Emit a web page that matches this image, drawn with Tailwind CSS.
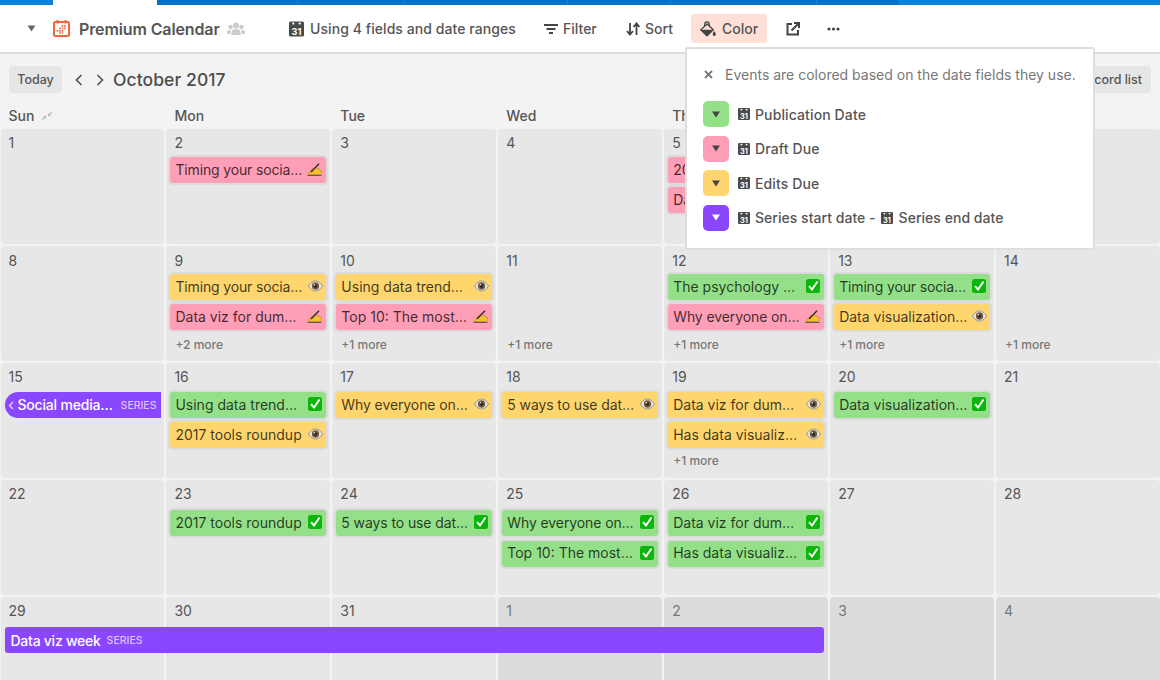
<!DOCTYPE html>
<html lang="en">
<head>
<meta charset="utf-8">
<title>Premium Calendar</title>
<script src="https://cdn.jsdelivr.net/npm/@tailwindcss/browser@4"></script>
</head>
<body class="m-0 bg-[#f3f3f3] font-['Inter',sans-serif] text-[#4d4d4d]">
<svg width="0" height="0" class="absolute">
  <defs>
    <symbol id="eye" viewBox="0 0 16 12">
      <path d="M0.5 6C3 2 5.500 0.700 8 0.700S13 2 15.500 6C13 10 10.500 11.300 8 11.300S3 10 0.500 6Z" fill="#e3e3e3" stroke="#8c8c8c" stroke-width="1"/>
      <circle cx="8" cy="6" r="3.900" fill="#7a5a3c"/>
      <circle cx="8" cy="6" r="2" fill="#2a2a2a"/>
      <circle cx="6.800" cy="4.600" r="0.800" fill="#fff"/>
    </symbol>
    <symbol id="check" viewBox="0 0 14 14">
      <rect x="0" y="0" width="14" height="14" rx="2.500" fill="#0bb50b"/>
      <path d="M3 7.200L6 10.500L11.500 2.500" fill="none" stroke="#fff" stroke-width="2"/>
    </symbol>
    <symbol id="hand" viewBox="0 0 15 13">
      <path d="M0.500 12.500H14.500" stroke="#444" stroke-width="0.800"/>
      <path d="M1 11.500L4.500 6.500L8.500 4.500L14.800 8C15.200 10 14 11.500 12.500 11.500Z" fill="#f4c22f" stroke="#a87f14" stroke-width="0.600"/>
      <path d="M4 9L12 0.700" stroke="#2d2d2d" stroke-width="1.400"/>
    </symbol>
    <symbol id="cal" viewBox="0 0 14 14">
      <rect x="0" y="0" width="14" height="14" rx="1.500" fill="#4a4a4a"/>
      <rect x="3" y="1" width="2" height="1.700" fill="#fff"/>
      <rect x="9" y="1" width="2" height="1.700" fill="#fff"/>
      <text x="7" y="12.400" text-anchor="middle" font-size="8.500" font-weight="700" fill="#fff" font-family="Inter, sans-serif">31</text>
    </symbol>
    <symbol id="caretdown" viewBox="0 0 10 8">
      <path d="M0.500 0.500H9.500L5 7.500Z" fill="currentColor"/>
    </symbol>
  </defs>
</svg>

<div class="relative h-[680px] w-[1160px] overflow-hidden">
  <!-- top strip -->
  <div class="flex h-[5px] bg-[#0a82dc]">
    <div class="w-[53px]"></div>
    <div class="w-[104px] bg-white"></div>
    <div class="flex w-[742px] bg-[#0371c8]">
      <div class="w-[141px] border-r border-[#0a82dc]"></div>
      <div class="w-[106px] border-r border-[#0a82dc]"></div>
      <div class="w-[164px] border-r border-[#0a82dc]"></div>
      <div class="w-[103px] border-r border-[#0a82dc]"></div>
      <div class="w-[146px] border-r border-[#0a82dc]"></div>
    </div>
  </div>

  <!-- toolbar -->
  <div class="flex h-[49px] items-center border-b-2 border-[#dddddd] bg-white text-[14px] font-medium text-[#555]">
    <svg class="ml-[27px] h-[7px] w-[9px] text-[#666]"><use href="#caretdown"/></svg>
    <svg class="ml-[17px] h-[17px] w-[17px]" viewBox="0 0 17 17">
      <rect x="1" y="2" width="15" height="14" rx="1.500" fill="#fff" stroke="#f0653b" stroke-width="2"/>
      <rect x="3.500" y="0" width="2" height="3.500" fill="#f0653b"/><rect x="11.500" y="0" width="2" height="3.500" fill="#f0653b"/>
      <g fill="#f4795a"><rect x="8.500" y="5" width="1.800" height="1.800"/><rect x="11" y="5" width="1.800" height="1.800"/><rect x="6" y="7.500" width="1.800" height="1.800"/><rect x="8.500" y="7.500" width="1.800" height="1.800"/><rect x="11" y="7.500" width="1.800" height="1.800"/><rect x="3.500" y="10" width="1.800" height="1.800"/><rect x="6" y="10" width="1.800" height="1.800"/><rect x="8.500" y="10" width="1.800" height="1.800"/><rect x="6" y="12.300" width="1.800" height="1.500"/><rect x="8.500" y="12.300" width="1.800" height="1.500"/></g>
    </svg>
    <span class="ml-[9px] w-[148px] whitespace-nowrap text-[16px] font-semibold tracking-[-0.12px]">Premium Calendar</span>
    <svg class="h-[14px] w-[18px] text-[#ccc]" viewBox="0 0 18 14" fill="currentColor">
      <circle cx="9" cy="3.500" r="3"/><circle cx="3.500" cy="5" r="2.300"/><circle cx="14.500" cy="5" r="2.300"/>
      <path d="M4.500 13V10C4.500 8 6.500 7 9 7S13.500 8 13.500 10V13Z"/><path d="M0 12V10C0 8.500 1.500 8 3.500 8L3.500 12Z"/><path d="M18 12V10C18 8.500 16.500 8 14.500 8L14.500 12Z"/>
    </svg>
    <svg class="ml-[44px] h-[16px] w-[15px]"><use href="#cal"/></svg>
    <span class="ml-[6px] w-[206px] whitespace-nowrap tracking-[0.07px]">Using 4 fields and date ranges</span>
    <svg class="ml-[28px] h-[12px] w-[14px] text-[#444]" viewBox="0 0 14 12" fill="currentColor"><rect x="0" y="1" width="14" height="2"/><rect x="2.500" y="5" width="9" height="2"/><rect x="5" y="9" width="4" height="2"/></svg>
    <span class="ml-[5px] w-[35px]">Filter</span>
    <svg class="ml-[28px] h-[14px] w-[14px] text-[#444]" viewBox="0 0 14 14" fill="none" stroke="currentColor" stroke-width="1.800"><path d="M4 1V12M1 9L4 12.500L7 9"/><path d="M10.500 13V2M7.500 5L10.500 1.500L13.500 5"/></svg>
    <span class="ml-[5px] w-[29px]">Sort</span>
    <div class="ml-[17px] flex h-[28.5px] w-[76px] items-center rounded-[3px] bg-[#ffe0d6] pl-[9px]">
      <svg class="h-[16px] w-[16px] text-[#444]" viewBox="0 0 16 16" fill="currentColor">
        <path d="M4.700 5.500V3.300C4.700 1.800 5.700 0.800 7 0.800C8.300 0.800 9.300 1.800 9.300 3.300V6" fill="none" stroke="currentColor" stroke-width="1.200"/>
        <path d="M7 3L0.800 8.800L7 14.800L13.300 8.800Z" fill="#ffe0d6" stroke="currentColor" stroke-width="1.300"/>
        <path d="M0.800 8.800H13.300L7 14.800Z"/>
        <path d="M14.200 10C15.200 11.500 15.800 12.500 15.800 13.300C15.800 14.300 15.100 15 14.200 15C13.300 15 12.700 14.300 12.700 13.300C12.700 12.500 13.200 11.500 14.200 10Z"/>
      </svg>
      <span class="ml-[6px]">Color</span>
    </div>
    <svg class="ml-[19px] h-[14px] w-[14px] text-[#444]" viewBox="0 0 14 14" fill="none" stroke="currentColor" stroke-width="2"><path d="M6 2H1.500V12.500H12V8"/><path d="M5.500 8.500L12 2M8 1H13V6"/></svg>
    <svg class="ml-[27px] h-[4px] w-[13px] text-[#444]" viewBox="0 0 13 4" fill="currentColor"><circle cx="2" cy="2" r="1.600"/><circle cx="6.500" cy="2" r="1.600"/><circle cx="11" cy="2" r="1.600"/></svg>
  </div>

  <!-- calendar controls -->
  <div class="flex h-[51px] items-center pl-[9px]">
    <div class="flex h-[27px] w-[53px] items-center justify-center rounded-[4px] bg-[#e6e6e6] pt-[1px] text-[12.500px] font-medium text-[#555]">Today</div>
    <svg class="ml-[13px] h-[12px] w-[8px] text-[#555]" viewBox="0 0 8 12" fill="none" stroke="currentColor" stroke-width="1.700"><path d="M6.500 1L1.500 6L6.500 11"/></svg>
    <svg class="ml-[13px] h-[12px] w-[8px] text-[#555]" viewBox="0 0 8 12" fill="none" stroke="currentColor" stroke-width="1.700"><path d="M1.500 1L6.500 6L1.500 11"/></svg>
    <span class="ml-[9px] pt-[2px] text-[17.500px] font-medium tracking-[0.08px] text-[#4d4d4d]">October 2017</span>
    <div class="ml-auto mr-[9px] flex h-[27px] w-[120px] items-center justify-end rounded-[4px] bg-[#e6e6e6] pr-[9px] pt-[1px] text-[12.500px] font-medium text-[#555]">Record list</div>
  </div>

  <!-- weekdays -->
  <div class="grid h-[24px] grid-cols-7 gap-x-[2px] pl-[0.5px] text-[14px] font-medium text-[#555]">
    <div class="flex items-center gap-[7px] pl-[8px] pb-[8px]">Sun
      <svg class="h-[10px] w-[12px] text-[#bbb]" viewBox="0 0 12 10" fill="none" stroke="currentColor" stroke-width="1.200"><path d="M1 9L4.500 5.500M2.500 5.500H4.500V7.500M11 1L7.500 4.500M9.500 4.500H7.500V2.500"/></svg>
    </div>
    <div class="flex items-center pl-[8px] pb-[8px]">Mon</div>
    <div class="flex items-center pl-[8px] pb-[8px]">Tue</div>
    <div class="flex items-center pl-[8px] pb-[8px]">Wed</div>
    <div class="flex items-center pl-[8px] pb-[8px]">Thu</div>
    <div class="invisible flex items-center pl-[8px] pb-[8px]">Fri</div>
    <div class="invisible flex items-center pl-[8px] pb-[8px]">Sat</div>
  </div>

  <!-- month grid -->
  <div class="grid auto-rows-[115px] grid-cols-7 gap-[2px] pl-[0.5px] text-[14px] text-[#555]">
    <!-- row 1 -->
    <div class="rounded-[4px] bg-[#e7e7e7] px-1 pt-[4px]"><div class="h-[20px] pl-[4px] leading-[20px]">1</div></div>
    <div class="flex flex-col gap-[4px] rounded-[4px] bg-[#e7e7e7] px-1 pb-[8px] pt-[4px]"><div class="h-[20px] pl-[4px] leading-[20px]">2</div>
      <div class="flex h-[26px] items-center justify-between rounded-[3px] bg-[#ff9eb7] pb-[2px] pl-[5px] pr-[4px] text-black/75 shadow-[0_0_0_2px_rgba(0,0,0,0.05)]"><span class="whitespace-nowrap tracking-[-0.15px]">Timing your socia…</span><svg class="h-[13px] w-[15px] shrink-0"><use href="#hand"/></svg></div>
    </div>
    <div class="rounded-[4px] bg-[#e7e7e7] px-1 pt-[4px]"><div class="h-[20px] pl-[4px] leading-[20px]">3</div></div>
    <div class="rounded-[4px] bg-[#e7e7e7] px-1 pt-[4px]"><div class="h-[20px] pl-[4px] leading-[20px]">4</div></div>
    <div class="flex flex-col gap-[4px] rounded-[4px] bg-[#e7e7e7] px-1 pb-[8px] pt-[4px]"><div class="h-[20px] pl-[4px] leading-[20px]">5</div>
      <div class="flex h-[26px] items-center rounded-[3px] bg-[#ff9eb7] pb-[2px] pl-[5px] text-black/75 shadow-[0_0_0_2px_rgba(0,0,0,0.05)]">2017 tools roundup</div>
      <div class="flex h-[26px] items-center rounded-[3px] bg-[#ff9eb7] pb-[2px] pl-[5px] text-black/75 shadow-[0_0_0_2px_rgba(0,0,0,0.05)]">Data viz for dum…</div>
    </div>
    <div class="rounded-[4px] bg-[#e7e7e7] px-1 pt-[4px]"></div>
    <div class="rounded-[4px] bg-[#e7e7e7] px-1 pt-[4px]"></div>

    <!-- row 2 -->
    <div class="rounded-[4px] bg-[#e7e7e7] px-1 pt-[4px]"><div class="h-[20px] pl-[4px] pt-[1px] leading-[20px]">8</div></div>
    <div class="flex flex-col gap-[4px] rounded-[4px] bg-[#e7e7e7] px-1 pb-[8px] pt-[4px]"><div class="h-[20px] pl-[4px] pt-[1px] leading-[20px]">9</div>
      <div class="flex h-[26px] items-center justify-between rounded-[3px] bg-[#ffd66e] pb-[2px] pl-[5px] pr-[3px] text-black/75 shadow-[0_0_0_2px_rgba(0,0,0,0.05)]"><span class="whitespace-nowrap tracking-[-0.15px]">Timing your socia…</span><svg class="h-[12px] w-[15px] shrink-0"><use href="#eye"/></svg></div>
      <div class="flex h-[26px] items-center justify-between rounded-[3px] bg-[#ff9eb7] pb-[2px] pl-[5px] pr-[4px] text-black/75 shadow-[0_0_0_2px_rgba(0,0,0,0.05)]"><span class="whitespace-nowrap">Data viz for dum…</span><svg class="h-[13px] w-[15px] shrink-0"><use href="#hand"/></svg></div>
      <div class="mt-auto h-[18px] pl-[5px] pt-[1px] text-[12px] font-medium leading-[18px] text-[#777]">+2 more</div>
    </div>
    <div class="flex flex-col gap-[4px] rounded-[4px] bg-[#e7e7e7] px-1 pb-[8px] pt-[4px]"><div class="h-[20px] pl-[4px] pt-[1px] leading-[20px]">10</div>
      <div class="flex h-[26px] items-center justify-between rounded-[3px] bg-[#ffd66e] pb-[2px] pl-[5px] pr-[3px] text-black/75 shadow-[0_0_0_2px_rgba(0,0,0,0.05)]"><span class="whitespace-nowrap">Using data trend…</span><svg class="h-[12px] w-[15px] shrink-0"><use href="#eye"/></svg></div>
      <div class="flex h-[26px] items-center justify-between rounded-[3px] bg-[#ff9eb7] pb-[2px] pl-[5px] pr-[4px] text-black/75 shadow-[0_0_0_2px_rgba(0,0,0,0.05)]"><span class="whitespace-nowrap">Top 10: The most…</span><svg class="h-[13px] w-[15px] shrink-0"><use href="#hand"/></svg></div>
      <div class="mt-auto h-[18px] pl-[5px] pt-[1px] text-[12px] font-medium leading-[18px] text-[#777]">+1 more</div>
    </div>
    <div class="flex flex-col gap-[4px] rounded-[4px] bg-[#e7e7e7] px-1 pb-[8px] pt-[4px]"><div class="h-[20px] pl-[4px] pt-[1px] leading-[20px]">11</div>
      <div class="mt-auto h-[18px] pl-[5px] pt-[1px] text-[12px] font-medium leading-[18px] text-[#777]">+1 more</div>
    </div>
    <div class="flex flex-col gap-[4px] rounded-[4px] bg-[#e7e7e7] px-1 pb-[8px] pt-[4px]"><div class="h-[20px] pl-[4px] pt-[1px] leading-[20px]">12</div>
      <div class="flex h-[26px] items-center justify-between rounded-[3px] bg-[#93e088] pb-[2px] pl-[5px] pr-[4px] text-black/75 shadow-[0_0_0_2px_rgba(0,0,0,0.05)]"><span class="whitespace-nowrap">The psychology …</span><svg class="h-[14px] w-[14px] shrink-0"><use href="#check"/></svg></div>
      <div class="flex h-[26px] items-center justify-between rounded-[3px] bg-[#ff9eb7] pb-[2px] pl-[5px] pr-[4px] text-black/75 shadow-[0_0_0_2px_rgba(0,0,0,0.05)]"><span class="whitespace-nowrap tracking-[-0.1px]">Why everyone on…</span><svg class="h-[13px] w-[15px] shrink-0"><use href="#hand"/></svg></div>
      <div class="mt-auto h-[18px] pl-[5px] pt-[1px] text-[12px] font-medium leading-[18px] text-[#777]">+1 more</div>
    </div>
    <div class="flex flex-col gap-[4px] rounded-[4px] bg-[#e7e7e7] px-1 pb-[8px] pt-[4px]"><div class="h-[20px] pl-[4px] pt-[1px] leading-[20px]">13</div>
      <div class="flex h-[26px] items-center justify-between rounded-[3px] bg-[#93e088] pb-[2px] pl-[5px] pr-[4px] text-black/75 shadow-[0_0_0_2px_rgba(0,0,0,0.05)]"><span class="whitespace-nowrap tracking-[-0.15px]">Timing your socia…</span><svg class="h-[14px] w-[14px] shrink-0"><use href="#check"/></svg></div>
      <div class="flex h-[26px] items-center justify-between rounded-[3px] bg-[#ffd66e] pb-[2px] pl-[5px] pr-[3px] text-black/75 shadow-[0_0_0_2px_rgba(0,0,0,0.05)]"><span class="whitespace-nowrap">Data visualization…</span><svg class="h-[12px] w-[15px] shrink-0"><use href="#eye"/></svg></div>
      <div class="mt-auto h-[18px] pl-[5px] pt-[1px] text-[12px] font-medium leading-[18px] text-[#777]">+1 more</div>
    </div>
    <div class="flex flex-col gap-[4px] rounded-[4px] bg-[#e7e7e7] px-1 pb-[8px] pt-[4px]"><div class="h-[20px] pl-[4px] pt-[1px] leading-[20px]">14</div>
      <div class="mt-auto h-[18px] pl-[5px] pt-[1px] text-[12px] font-medium leading-[18px] text-[#777]">+1 more</div>
    </div>

    <!-- row 3 -->
    <div class="flex flex-col gap-[4px] rounded-[4px] bg-[#e7e7e7] px-1 pb-[8px] pt-[4px]"><div class="h-[20px] pl-[4px] leading-[20px]">15</div>
      <div class="mt-[1px] flex h-[26px] w-[156px] items-center rounded-l-full rounded-r-[2px] bg-[#8b46ff] pb-[2px] pl-[3px] pr-[4px] text-white"><svg class="mt-[2px] h-[9px] w-[6px] shrink-0 text-white/70" viewBox="0 0 6 9" fill="none" stroke="currentColor" stroke-width="1.500"><path d="M5 1L1.500 4.500L5 8"/></svg><span class="ml-[4px] whitespace-nowrap font-medium tracking-[-0.2px]">Social media…</span><span class="ml-auto mt-[3px] text-[10.500px] font-medium text-white/70">SERIES</span></div>
    </div>
    <div class="flex flex-col gap-[4px] rounded-[4px] bg-[#e7e7e7] px-1 pb-[8px] pt-[4px]"><div class="h-[20px] pl-[4px] leading-[20px]">16</div>
      <div class="mt-[1px] flex h-[26px] items-center justify-between rounded-[3px] bg-[#93e088] pb-[2px] pl-[5px] pr-[4px] text-black/75 shadow-[0_0_0_2px_rgba(0,0,0,0.05)]"><span class="whitespace-nowrap">Using data trend…</span><svg class="h-[14px] w-[14px] shrink-0"><use href="#check"/></svg></div>
      <div class="flex h-[26px] items-center justify-between rounded-[3px] bg-[#ffd66e] pb-[2px] pl-[5px] pr-[3px] text-black/75 shadow-[0_0_0_2px_rgba(0,0,0,0.05)]"><span class="whitespace-nowrap">2017 tools roundup</span><svg class="h-[12px] w-[15px] shrink-0"><use href="#eye"/></svg></div>
    </div>
    <div class="flex flex-col gap-[4px] rounded-[4px] bg-[#e7e7e7] px-1 pb-[8px] pt-[4px]"><div class="h-[20px] pl-[4px] leading-[20px]">17</div>
      <div class="mt-[1px] flex h-[26px] items-center justify-between rounded-[3px] bg-[#ffd66e] pb-[2px] pl-[5px] pr-[3px] text-black/75 shadow-[0_0_0_2px_rgba(0,0,0,0.05)]"><span class="whitespace-nowrap tracking-[-0.1px]">Why everyone on…</span><svg class="h-[12px] w-[15px] shrink-0"><use href="#eye"/></svg></div>
    </div>
    <div class="flex flex-col gap-[4px] rounded-[4px] bg-[#e7e7e7] px-1 pb-[8px] pt-[4px]"><div class="h-[20px] pl-[4px] leading-[20px]">18</div>
      <div class="mt-[1px] flex h-[26px] items-center justify-between rounded-[3px] bg-[#ffd66e] pb-[2px] pl-[5px] pr-[3px] text-black/75 shadow-[0_0_0_2px_rgba(0,0,0,0.05)]"><span class="whitespace-nowrap tracking-[-0.1px]">5 ways to use dat…</span><svg class="h-[12px] w-[15px] shrink-0"><use href="#eye"/></svg></div>
    </div>
    <div class="flex flex-col gap-[4px] rounded-[4px] bg-[#e7e7e7] px-1 pb-[8px] pt-[4px]"><div class="h-[20px] pl-[4px] leading-[20px]">19</div>
      <div class="mt-[1px] flex h-[26px] items-center justify-between rounded-[3px] bg-[#ffd66e] pb-[2px] pl-[5px] pr-[3px] text-black/75 shadow-[0_0_0_2px_rgba(0,0,0,0.05)]"><span class="whitespace-nowrap">Data viz for dum…</span><svg class="h-[12px] w-[15px] shrink-0"><use href="#eye"/></svg></div>
      <div class="flex h-[26px] items-center justify-between rounded-[3px] bg-[#ffd66e] pb-[2px] pl-[5px] pr-[3px] text-black/75 shadow-[0_0_0_2px_rgba(0,0,0,0.05)]"><span class="whitespace-nowrap">Has data visualiz…</span><svg class="h-[12px] w-[15px] shrink-0"><use href="#eye"/></svg></div>
      <div class="mt-auto h-[18px] pl-[5px] text-[12px] font-medium leading-[18px] text-[#777]">+1 more</div>
    </div>
    <div class="flex flex-col gap-[4px] rounded-[4px] bg-[#e7e7e7] px-1 pb-[8px] pt-[4px]"><div class="h-[20px] pl-[4px] leading-[20px]">20</div>
      <div class="mt-[1px] flex h-[26px] items-center justify-between rounded-[3px] bg-[#93e088] pb-[2px] pl-[5px] pr-[4px] text-black/75 shadow-[0_0_0_2px_rgba(0,0,0,0.05)]"><span class="whitespace-nowrap">Data visualization…</span><svg class="h-[14px] w-[14px] shrink-0"><use href="#check"/></svg></div>
    </div>
    <div class="rounded-[4px] bg-[#e7e7e7] px-1 pt-[4px]"><div class="h-[20px] pl-[4px] leading-[20px]">21</div></div>

    <!-- row 4 -->
    <div class="rounded-[4px] bg-[#e7e7e7] px-1 pt-[4px]"><div class="h-[20px] pl-[4px] leading-[20px]">22</div></div>
    <div class="flex flex-col gap-[4px] rounded-[4px] bg-[#e7e7e7] px-1 pb-[8px] pt-[4px]"><div class="h-[20px] pl-[4px] leading-[20px]">23</div>
      <div class="mt-[2px] flex h-[26px] items-center justify-between rounded-[3px] bg-[#93e088] pb-[2px] pl-[5px] pr-[4px] text-black/75 shadow-[0_0_0_2px_rgba(0,0,0,0.05)]"><span class="whitespace-nowrap">2017 tools roundup</span><svg class="h-[14px] w-[14px] shrink-0"><use href="#check"/></svg></div>
    </div>
    <div class="flex flex-col gap-[4px] rounded-[4px] bg-[#e7e7e7] px-1 pb-[8px] pt-[4px]"><div class="h-[20px] pl-[4px] leading-[20px]">24</div>
      <div class="mt-[2px] flex h-[26px] items-center justify-between rounded-[3px] bg-[#93e088] pb-[2px] pl-[5px] pr-[4px] text-black/75 shadow-[0_0_0_2px_rgba(0,0,0,0.05)]"><span class="whitespace-nowrap tracking-[-0.1px]">5 ways to use dat…</span><svg class="h-[14px] w-[14px] shrink-0"><use href="#check"/></svg></div>
    </div>
    <div class="flex flex-col gap-[4px] rounded-[4px] bg-[#e7e7e7] px-1 pb-[8px] pt-[4px]"><div class="h-[20px] pl-[4px] leading-[20px]">25</div>
      <div class="mt-[2px] flex h-[26px] items-center justify-between rounded-[3px] bg-[#93e088] pb-[2px] pl-[5px] pr-[4px] text-black/75 shadow-[0_0_0_2px_rgba(0,0,0,0.05)]"><span class="whitespace-nowrap tracking-[-0.1px]">Why everyone on…</span><svg class="h-[14px] w-[14px] shrink-0"><use href="#check"/></svg></div>
      <div class="mt-[1px] flex h-[26px] items-center justify-between rounded-[3px] bg-[#93e088] pb-[4px] pl-[5px] pr-[4px] text-black/75 shadow-[0_0_0_2px_rgba(0,0,0,0.05)]"><span class="whitespace-nowrap">Top 10: The most…</span><svg class="mt-[2px] h-[14px] w-[14px] shrink-0"><use href="#check"/></svg></div>
    </div>
    <div class="flex flex-col gap-[4px] rounded-[4px] bg-[#e7e7e7] px-1 pb-[8px] pt-[4px]"><div class="h-[20px] pl-[4px] leading-[20px]">26</div>
      <div class="mt-[2px] flex h-[26px] items-center justify-between rounded-[3px] bg-[#93e088] pb-[2px] pl-[5px] pr-[4px] text-black/75 shadow-[0_0_0_2px_rgba(0,0,0,0.05)]"><span class="whitespace-nowrap">Data viz for dum…</span><svg class="h-[14px] w-[14px] shrink-0"><use href="#check"/></svg></div>
      <div class="mt-[1px] flex h-[26px] items-center justify-between rounded-[3px] bg-[#93e088] pb-[4px] pl-[5px] pr-[4px] text-black/75 shadow-[0_0_0_2px_rgba(0,0,0,0.05)]"><span class="whitespace-nowrap">Has data visualiz…</span><svg class="mt-[2px] h-[14px] w-[14px] shrink-0"><use href="#check"/></svg></div>
    </div>
    <div class="rounded-[4px] bg-[#e7e7e7] px-1 pt-[4px]"><div class="h-[20px] pl-[4px] leading-[20px]">27</div></div>
    <div class="rounded-[4px] bg-[#e7e7e7] px-1 pt-[4px]"><div class="h-[20px] pl-[4px] leading-[20px]">28</div></div>

    <!-- row 5 -->
    <div class="relative rounded-[4px] bg-[#e7e7e7] px-1 pt-[4px]"><div class="h-[20px] pl-[4px] leading-[20px]">29</div>
      <div class="absolute left-[4px] top-[30px] z-10 flex h-[26px] w-[819px] items-center rounded-[3px] bg-[#8b46ff] pl-[6px] text-white"><span class="whitespace-nowrap font-medium tracking-[-0.25px]">Data viz week</span><span class="ml-[6px] mt-[1px] text-[10.500px] font-medium text-white/70">SERIES</span></div>
    </div>
    <div class="rounded-[4px] bg-[#e7e7e7] px-1 pt-[4px]"><div class="h-[20px] pl-[4px] leading-[20px]">30</div></div>
    <div class="rounded-[4px] bg-[#e7e7e7] px-1 pt-[4px]"><div class="h-[20px] pl-[4px] leading-[20px]">31</div></div>
    <div class="rounded-[4px] bg-[#dcdcdc] px-1 pt-[4px] text-[#777]"><div class="h-[20px] pl-[4px] leading-[20px]">1</div></div>
    <div class="rounded-[4px] bg-[#dcdcdc] px-1 pt-[4px] text-[#777]"><div class="h-[20px] pl-[4px] leading-[20px]">2</div></div>
    <div class="rounded-[4px] bg-[#dcdcdc] px-1 pt-[4px] text-[#777]"><div class="h-[20px] pl-[4px] leading-[20px]">3</div></div>
    <div class="rounded-[4px] bg-[#dcdcdc] px-1 pt-[4px] text-[#777]"><div class="h-[20px] pl-[4px] leading-[20px]">4</div></div>
  </div>

  <!-- color popover -->
  <div class="absolute left-[685px] top-[47px] z-20 h-[203px] w-[410px] rounded-[3px] border-2 border-[#dedede] bg-white text-[14px] font-medium text-[#555]">
    <div class="flex h-[52px] items-center pb-[2px] pl-[17px]">
      <svg class="h-[9px] w-[9px] text-[#777]" viewBox="0 0 9 9" fill="none" stroke="currentColor" stroke-width="1.800"><path d="M1 1L8 8M8 1L1 8"/></svg>
      <span class="ml-[12px] whitespace-nowrap font-normal text-[#777]">Events are colored based on the date fields they use.</span>
    </div>
    <div class="flex flex-col gap-[8.500px] pl-[16px]">
      <div class="flex h-[26px] items-center tracking-[0.12px]"><div class="flex h-[26px] w-[26px] items-center justify-center rounded-[5px] bg-[#93e088] text-[#444]"><svg class="h-[7px] w-[10px]"><use href="#caretdown"/></svg></div><svg class="ml-[9px] h-[12px] w-[12px]"><use href="#cal"/></svg><span class="ml-[5px]">Publication Date</span></div>
      <div class="flex h-[26px] items-center tracking-[0.12px]"><div class="flex h-[26px] w-[26px] items-center justify-center rounded-[5px] bg-[#ff9eb7] text-[#444]"><svg class="h-[7px] w-[10px]"><use href="#caretdown"/></svg></div><svg class="ml-[9px] h-[12px] w-[12px]"><use href="#cal"/></svg><span class="ml-[5px]">Draft Due</span></div>
      <div class="flex h-[26px] items-center tracking-[0.12px]"><div class="flex h-[26px] w-[26px] items-center justify-center rounded-[5px] bg-[#ffd66e] text-[#444]"><svg class="h-[7px] w-[10px]"><use href="#caretdown"/></svg></div><svg class="ml-[9px] h-[12px] w-[12px]"><use href="#cal"/></svg><span class="ml-[5px]">Edits Due</span></div>
      <div class="flex h-[26px] items-center tracking-[0.03px]"><div class="flex h-[26px] w-[26px] items-center justify-center rounded-[5px] bg-[#8b46ff] text-white"><svg class="h-[7px] w-[10px]"><use href="#caretdown"/></svg></div><svg class="ml-[9px] h-[12px] w-[12px]"><use href="#cal"/></svg><span class="ml-[5px]">Series start date -</span><svg class="ml-[5px] h-[12px] w-[12px]"><use href="#cal"/></svg><span class="ml-[6px]">Series end date</span></div>
    </div>
  </div>
</div>
</body>
</html>
